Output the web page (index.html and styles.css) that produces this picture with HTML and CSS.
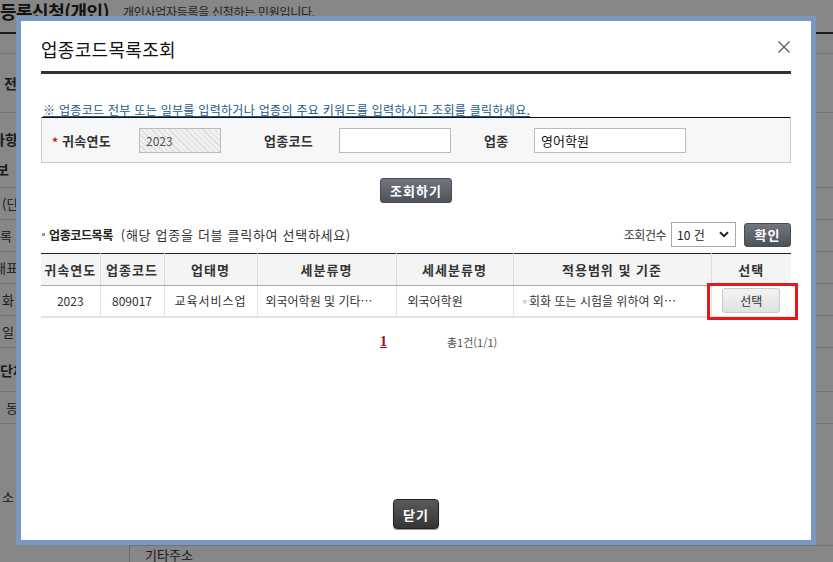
FILE: index.html
```html
<!DOCTYPE html>
<html lang="ko">
<head>
  <meta charset="UTF-8">
  <title>업종코드목록조회</title>
  <meta name="viewport" content="width=device-width,initial-scale=1">
  <link rel="stylesheet" href="styles.css">
</head>
<body>
  <!-- 뒤쪽 신청 화면 -->
  <div id="page">
    <div class="page-head">
      <h1>등록신청(개인)</h1>
      <span class="page-desc">개인사업자등록을 신청하는 민원입니다.</span>
    </div>
    <div class="frow r0"></div>
    <div class="frow r1"><span class="lb b m4">전</span></div>
    <div class="frow r2 two"><span class="lb b mn8">사항</span><span class="lb b mn4">보</span></div>
    <div class="frow r32"><span class="lb m2">(단</span></div>
    <div class="frow r32"><span class="lb">록</span></div>
    <div class="frow r32"><span class="lb mn6">대표</span></div>
    <div class="frow r32"><span class="lb m2">화</span></div>
    <div class="frow r32"><span class="lb m2">일</span></div>
    <div class="frow r44"><span class="lb b">단체</span></div>
    <div class="frow r32"><span class="lb m6">동</span></div>
    <div class="frow addr">
      <div class="addr-label"><span class="lb m2">소</span></div>
      <div class="addr-body">
        <div class="addr-sub">기타주소</div>
      </div>
    </div>
  </div>
  <div class="dim"></div>

  <!-- 업종코드 조회 팝업 -->
  <div class="modal">
    <div class="modal-head">
      <h2>업종코드목록조회</h2>
      <button class="btn-x" title="닫기">
        <svg width="12" height="12" viewBox="0 0 12 12"><path d="M0.5 0.5L11.5 11.5M11.5 0.5L0.5 11.5" stroke="#555" stroke-width="1.1" fill="none"/></svg>
      </button>
    </div>

    <p class="notice">※ 업종코드 전부 또는 일부를 입력하거나 업종의 주요 키워드를 입력하시고 조회를 클릭하세요.</p>

    <div class="search">
      <span class="req">*</span>
      <label class="f-label w-year">귀속연도</label>
      <input class="f-input in-year" type="text" value="2023" readonly>
      <label class="f-label w-code">업종코드</label>
      <input class="f-input in-code" type="text" value="">
      <label class="f-label w-name">업종</label>
      <input class="f-input in-name" type="text" value="영어학원">
    </div>

    <div class="search-btn">
      <button class="btn-dark btn-search">조회하기</button>
    </div>

    <div class="list-head">
      <div class="list-title">
        <span class="bullet"></span>
        <strong>업종코드목록</strong>
        <span class="list-desc">(해당 업종을 더블 클릭하여 선택하세요)</span>
      </div>
      <div class="list-opt">
        <span class="cnt-label">조회건수</span>
        <div class="sel">
          <span>10 건</span>
          <svg width="10" height="7" viewBox="0 0 10 7"><path d="M1 1.2L5 5.2L9 1.2" stroke="#222" stroke-width="2" fill="none"/></svg>
        </div>
        <button class="btn-dark btn-ok">확인</button>
      </div>
    </div>

    <table class="grid">
      <colgroup>
        <col class="c1"><col class="c2"><col class="c3"><col class="c4"><col class="c5"><col class="c6"><col class="c7">
      </colgroup>
      <thead>
        <tr>
          <th>귀속연도</th>
          <th>업종코드</th>
          <th>업태명</th>
          <th>세분류명</th>
          <th>세세분류명</th>
          <th>적용범위 및 기준</th>
          <th>선택</th>
        </tr>
      </thead>
      <tbody>
        <tr>
          <td>2023</td>
          <td>809017</td>
          <td class="wd">교육서비스업</td>
          <td class="left">외국어학원 및 기타…</td>
          <td class="left wide">외국어학원</td>
          <td class="left"><span class="dot">◦</span>회화 또는 시험을 위하여 외…</td>
          <td>
            <span class="pick">
              <button class="btn-pick">선택</button>
              <span class="hl"></span>
            </span>
          </td>
        </tr>
      </tbody>
    </table>

    <div class="paging">
      <a class="pg-num">1</a>
      <span class="pg-total">총1건(1/1)</span>
    </div>

    <div class="modal-foot">
      <button class="btn-close">닫기</button>
    </div>
  </div>
</body>
</html>
```

FILE: styles.css
```css
*{margin:0;padding:0;box-sizing:border-box}
body{font-family:"Noto Sans CJK KR","Noto Sans",sans-serif;color:#333;background:#fff;width:833px;height:562px;overflow:hidden;position:relative}
button,input{font-family:inherit}

/* 뒤쪽 화면 */
#page{width:833px}
.page-head{height:34px;border-bottom:2px solid #333;display:flex;align-items:flex-start;white-space:nowrap}
.page-head h1{font-size:18px;line-height:22px;font-weight:bold;color:#222;letter-spacing:-0.5px}
.page-desc{font-size:12px;line-height:16px;margin-top:4px;margin-left:14px;color:#444;letter-spacing:-0.3px}
.frow{border-bottom:1px solid #ddd;display:flex;align-items:center;font-size:13px;white-space:nowrap;color:#333}
.r0{height:20px}
.r1{height:59px}
.r2{height:75px}
.r2.two{flex-direction:column;align-items:flex-start;justify-content:center;gap:14px;padding-top:8px}
.r32{height:32px}
.r44{height:44px}
.lb{display:block;line-height:16px}
.lb.b{font-weight:bold;font-size:14px}
.m2{margin-left:2px}
.m4{margin-left:4px}
.m6{margin-left:6px}
.mn4{margin-left:-4px}
.mn6{margin-left:-6px}
.mn8{margin-left:-8px}
.addr{height:146px;align-items:stretch;border-bottom:0}
.addr-label{width:130px;display:flex;align-items:center;border-right:1px solid #ccc}
.addr-body{flex:1;display:flex;flex-direction:column;justify-content:flex-start}
.addr-sub{margin-top:121px;border-top:1px solid #ddd;line-height:18px;padding-left:15px;font-size:13px}
.dim{position:absolute;left:0;top:0;right:0;bottom:0;background:rgba(0,0,0,0.47)}

/* 팝업 */
.modal{position:absolute;left:16px;top:16px;width:800px;height:529px;border:5px solid #7898c1;background:#fff;padding:0 20px 11px;display:flex;flex-direction:column}
.modal-head{position:relative;padding:15px 0 9px;border-bottom:3px solid #333}
.modal-head h2{font-size:18px;line-height:26px;font-weight:normal;color:#111;letter-spacing:0.3px}
.btn-x{position:absolute;right:1px;top:20px;width:12px;height:12px;border:0;background:none;display:flex}

.notice{margin-top:28px;font-size:12px;line-height:15px;color:#1a5886;text-decoration:underline;letter-spacing:0.3px;padding-left:2px;white-space:nowrap}

.search{height:46px;border:1px solid #ccc;border-top-color:#111;background:#f7f7f7;display:flex;align-items:center;padding-left:10px}
.req{width:10px;color:#c4161c;font-size:12px;font-weight:bold;line-height:12px;padding-top:3px}
.f-label{font-size:13px;font-weight:bold;color:#333;letter-spacing:0.3px}
.w-year{width:77px}
.w-code{width:75px;margin-left:43px}
.w-name{width:50px;margin-left:33px}
.f-input{height:25px;border:1px solid #bbb;background:#fff;padding:0 6px;font-size:13px;color:#111;outline:none}
.in-year{width:82px;font-size:12px;color:#555;background:repeating-linear-gradient(45deg,#dcdcdc 0 1px,#f0f0f0 1px 4px)}
.in-code{width:112px}
.in-name{width:152px}

.btn-dark{height:25px;border:1px solid #484d55;border-radius:3px;background:linear-gradient(#70767f,#4d525a);color:#fff;font-weight:bold;font-size:13px;letter-spacing:1px}
.search-btn{margin-top:15px;display:flex;justify-content:center}
.btn-search{width:72px}

.list-head{margin-top:19px;height:25px;display:flex;align-items:center;justify-content:space-between}
.list-title{display:flex;align-items:center;white-space:nowrap}
.bullet{width:3px;height:3px;background:#999;margin-left:1px;margin-right:4px}
.list-title strong{font-size:12px;letter-spacing:-0.4px;color:#222}
.list-desc{font-size:13px;margin-left:8px;color:#333;letter-spacing:0.7px}
.list-opt{display:flex;align-items:center}
.cnt-label{font-size:12px;letter-spacing:-0.5px;margin-right:5px}
.sel{width:65px;height:25px;border:1px solid #a9a9a9;background:#fff;display:flex;align-items:center;justify-content:space-between;padding:0 6px 0 5px;font-size:12px;color:#222}
.btn-ok{width:47px;height:24px;margin-left:8px}

.grid{margin-top:6px;width:100%;border-collapse:collapse;table-layout:fixed;border-top:1px solid #222}
.c1{width:59px}.c2{width:64px}.c3{width:93px}.c4{width:139px}.c5{width:117px}.c6{width:198px}.c7{width:80px}
.grid th{height:32px;background:#f4f4f4;border-bottom:1px solid #aaa;border-left:1px solid #ddd;font-size:13px;font-weight:bold;letter-spacing:1px;color:#333;white-space:nowrap;padding:0}
.grid td{height:31px;border-bottom:2px solid #e3e3e3;border-left:1px solid #e3e3e3;font-size:12px;text-align:center;white-space:nowrap;overflow:hidden;color:#333;padding:0 2px}
.grid th:first-child,.grid td:first-child{border-left:0}
.grid td.wd{letter-spacing:1px}
.grid td.left{text-align:left;padding-left:8px}
.grid td.wide{padding-left:11px}
.grid td:last-child{overflow:visible}
.dot{font-family:"DejaVu Sans",sans-serif;font-size:11px;margin-right:1px}

.pick{position:relative;display:inline-flex;vertical-align:middle}
.btn-pick{width:58px;height:25px;border:1px solid #c9c9c9;border-radius:3px;background:linear-gradient(#f3f3f3,#e1e1e1);font-size:12px;color:#333}
.hl{position:absolute;left:-15px;top:-5px;width:91px;height:37px;border:3px solid #e8161b}

.paging{margin-top:16px;height:16px;display:flex;align-items:center}
.pg-num{margin-left:339px;font-family:"Liberation Serif",serif;font-weight:bold;font-size:14px;color:#b3001b;text-decoration:underline}
.pg-total{margin-left:60px;font-size:11px;color:#555}

.modal-foot{margin-top:auto;display:flex;justify-content:center}
.btn-close{width:46px;height:30px;border:1px solid #222;border-radius:4px;background:linear-gradient(#5a5a5a,#353535);color:#fff;font-weight:bold;font-size:13px;letter-spacing:1px;box-shadow:0 1px 1px rgba(0,0,0,0.4)}
```
